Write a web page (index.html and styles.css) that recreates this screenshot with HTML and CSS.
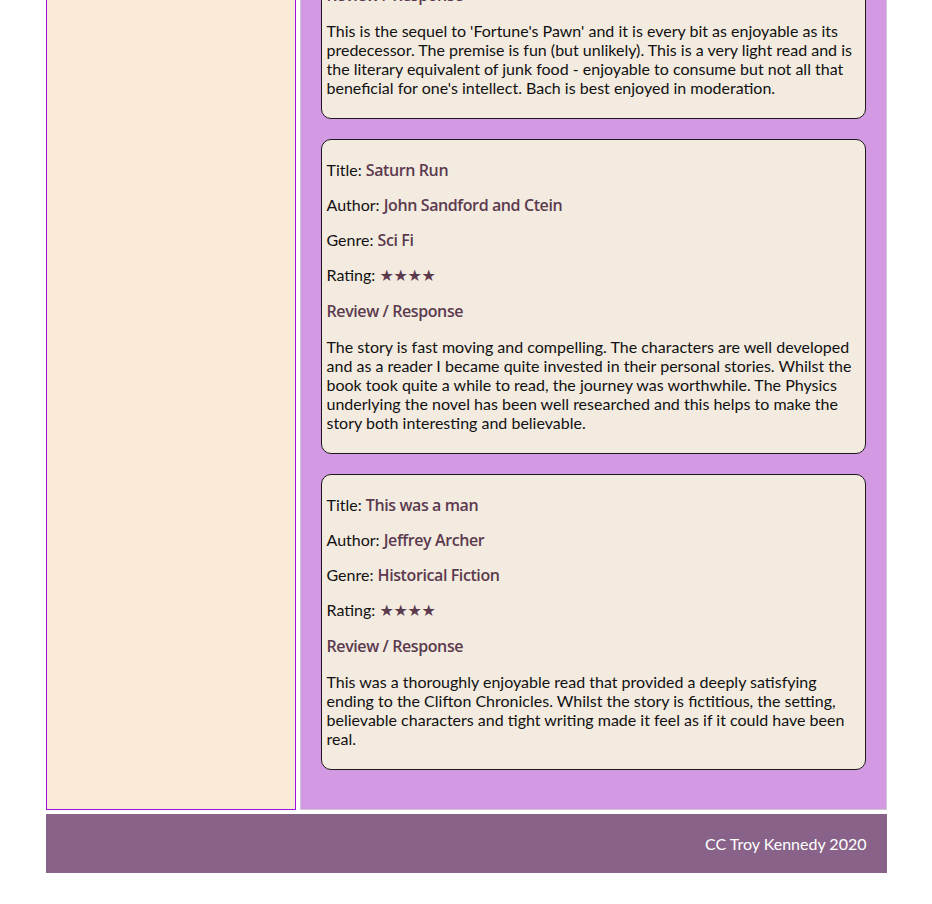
FILE: index.html
```html
<!DOCTYPE html>
<html lang="en">
<head>
<meta charset="utf-8">
<title>Book Reviews</title>
<link rel="stylesheet" href="styles.css">
</head>
<body>
<div class="page">
  <div class="layout">
    <aside class="sidebar"></aside>
    <main class="main">
      <article class="card">
        <p>Title: <span class="val">Honor's Knight</span></p>
        <p>Author: <span class="val">Rachel Bach</span></p>
        <p>Genre: <span class="val">Sci Fi</span></p>
        <p>Rating: <span class="val stars">★★★</span></p>
        <p class="val">Review / Response</p>
        <p>This is the sequel to 'Fortune's Pawn' and it is every bit as enjoyable as its predecessor. The premise is fun (but unlikely). This is a very light read and is the literary equivalent of junk food - enjoyable to consume but not all that beneficial for one's intellect. Bach is best enjoyed in moderation.</p>
      </article>
      <article class="card">
        <p>Title: <span class="val">Saturn Run</span></p>
        <p>Author: <span class="val">John Sandford and Ctein</span></p>
        <p>Genre: <span class="val">Sci Fi</span></p>
        <p>Rating: <span class="val stars">★★★★</span></p>
        <p class="val">Review / Response</p>
        <p>The story is fast moving and compelling. The characters are well developed and as a reader I became quite invested in their personal stories. Whilst the book took quite a while to read, the journey was worthwhile. The Physics underlying the novel has been well researched and this helps to make the story both interesting and believable.</p>
      </article>
      <article class="card">
        <p>Title: <span class="val">This was a man</span></p>
        <p>Author: <span class="val">Jeffrey Archer</span></p>
        <p>Genre: <span class="val">Historical Fiction</span></p>
        <p>Rating: <span class="val stars">★★★★</span></p>
        <p class="val">Review / Response</p>
        <p>This was a thoroughly enjoyable read that provided a deeply satisfying ending to the Clifton Chronicles. Whilst the story is fictitious, the setting, believable characters and tight writing made it feel as if it could have been real.</p>
      </article>
    </main>
  </div>
  <footer class="footer">CC Troy Kennedy 2020</footer>
</div>
</body>
</html>
```

FILE: styles.css
```css
html, body {
  margin: 0;
  padding: 0;
  background: #ffffff;
}
body {
  font-family: Lato, "Liberation Sans", sans-serif;
  font-size: 16px;
  line-height: 19px;
  color: #111111;
}
.page {
  width: 841px;
  margin: -178px auto 0;
  padding-bottom: 31px;
}
.layout {
  display: flex;
  gap: 4px;
  align-items: stretch;
}
.sidebar {
  width: 250px;
  box-sizing: border-box;
  flex: none;
  background: #faead6;
  border: 1px solid #9a10e0;
}
.main {
  width: 587px;
  box-sizing: border-box;
  background: #d39ae3;
  border: 1px solid #cdc5cf;
  padding: 0 20px 39px 20px;
  display: flex;
  flex-direction: column;
  gap: 20px;
}
.card {
  background: #f3ebe0;
  border: 1px solid #1a1a1a;
  border-radius: 10px;
  padding: 4px 5px 5px;
}
.card p {
  margin: 16px 0;
}
.val {
  font-family: "Open Sans", "DejaVu Sans", sans-serif;
  font-weight: 600;
  color: #5b3a4e;
  letter-spacing: -0.4px;
  line-height: 16px;
}
.card p.val {
  line-height: 19px;
  margin: 17px 0 15px;
}
.stars {
  font-family: "DejaVu Sans", sans-serif;
  font-weight: normal;
  letter-spacing: -0.3px;
  line-height: 18px;
}
.footer {
  margin-top: 4px;
  background: #886288;
  color: #ffffff;
  text-align: right;
  padding: 20px 20px;
}
```
